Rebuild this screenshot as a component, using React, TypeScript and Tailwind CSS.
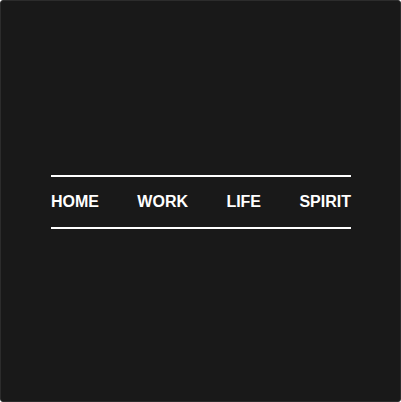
export default function App() {
  return (
    <div className="w-[401px] h-[402px] bg-[#191919] border border-[#2c2c2c] rounded-[3px] pl-[50px] pt-[174px]" style={{ fontFamily: '"Liberation Sans", Arial, sans-serif' }}>
      <nav className="w-[300px] h-[54px] border-y-2 border-white flex items-center justify-between text-white font-bold text-[16px] leading-none">
        <span>HOME</span>
        <span>WORK</span>
        <span>LIFE</span>
        <span>SPIRIT</span>
      </nav>
    </div>
  );
}
